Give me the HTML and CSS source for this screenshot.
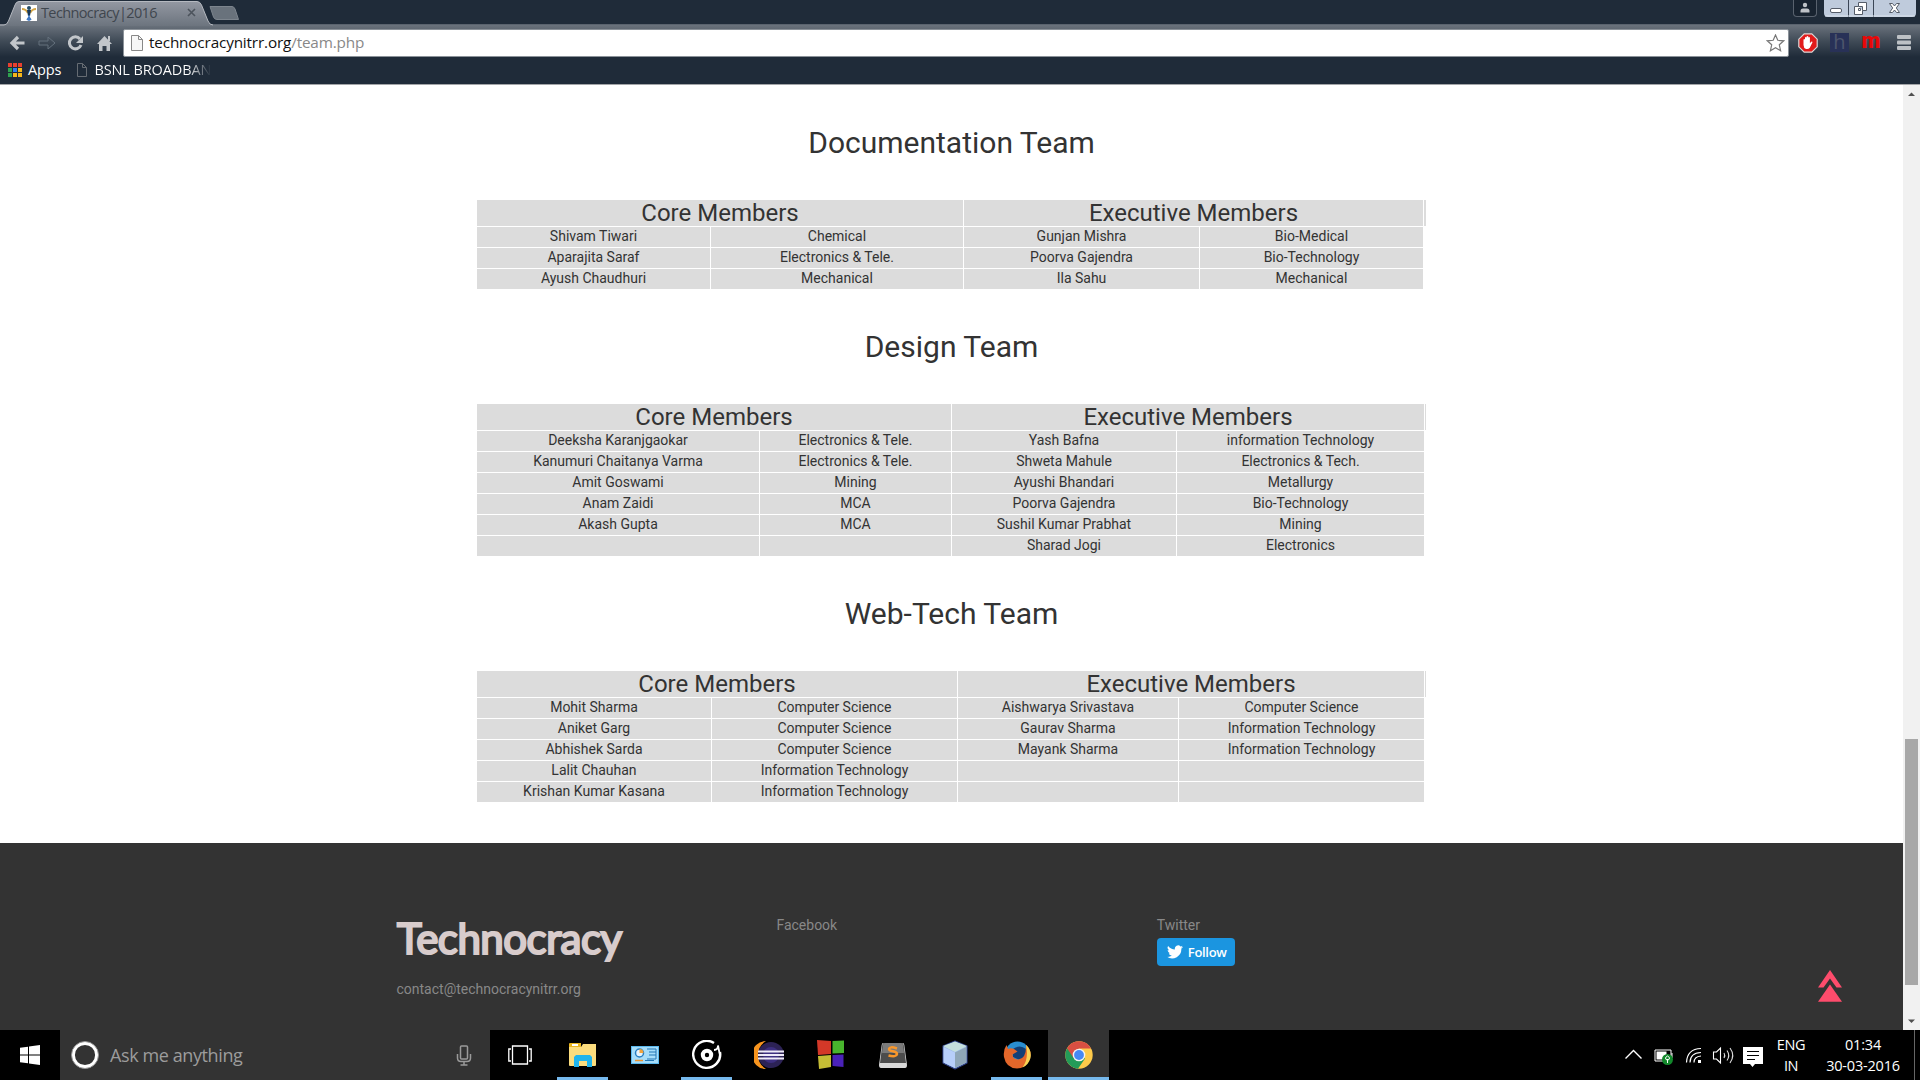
FILE: index.html
```html
<!DOCTYPE html>
<html lang="en">
<head>
<meta charset="utf-8">
<title>Technocracy|2016</title>
<link rel="stylesheet" href="styles.css">
</head>
<body>
<div class="screen">
  <header class="browser">
    <div class="tabstrip">
      <svg class="tab-shape" width="250" height="26" viewBox="0 0 250 26">
        <defs>
          <linearGradient id="tabFill" x1="0" y1="0" x2="0" y2="1"><stop offset="0" stop-color="#9398a2"/><stop offset="1" stop-color="#6c747e"/></linearGradient>
        </defs>
        <path d="M0 25.5 H4 Q7 25 8.5 21 L15 5 Q16 1.5 19 1.5 H197 Q200 1.500 201.500 5 L208 21 Q209.500 25 213 25.500 V26 H0Z" fill="url(#tabFill)"/>
        <path d="M0 25 H4 Q7 25 8.500 21 L15 5 Q16 1.500 19 1.500 H197 Q200 1.500 201.500 5 L208 21 Q209.500 25 213 25" fill="none" stroke="#b5b9c0"/>
        <path d="M210 6.500 H232 Q234 6.500 235 9 L238.500 19.500 H217 Q214.500 19.500 213.500 17Z" fill="#69727c" stroke="#7d858e"/>
      </svg>
      <div class="tab">
        <svg width="16" height="16" viewBox="0 0 16 16"><path fill="#fff" d="M0 0h16v16H0z"/><path d="M1 4q4 0 6 4M15 4q-4 0-6 4" stroke="#d5a646" stroke-width="2" fill="none"/><circle cx="8" cy="3" r="2" fill="#234c66"/><path d="M6 5h4l-1 6H7z" fill="#19395a"/><path d="M8 10v6M6 15l2-3 2 3" stroke="#3e78c4" stroke-width="1.500"/></svg>
        <span class="tab-title">Technocracy|2016</span>
        <svg class="tab-close" width="9" height="9" viewBox="0 0 9 9"><path d="M1 1l7 7M8 1L1 8" stroke="#4c535c" stroke-width="1.600"/></svg>
      </div>
      <div class="window-buttons">
        <span class="user-btn"><svg width="12" height="12" viewBox="0 0 12 12" fill="#bfc3c8"><circle cx="6" cy="3" r="2.200"/><path d="M1.500 10.500V9Q1.500 6.500 4 6.500h4q2.500 0 2.500 2.500v1.500z"/></svg></span>
        <span class="win-group">
          <svg width="92" height="17" viewBox="0 0 92 17"><path d="M0 0h92v13q0 4-4 4H4q-4 0-4-4z" fill="#bfcbdc"/><path d="M24.500 0v17M49.500 0v17" stroke="#3b4656"/><path d="M1 16h90" stroke="#dae2ec"/><rect x="6.500" y="8.500" width="11" height="4" rx="1.500" fill="#fff" stroke="#555c68"/><path d="M34.500 2.500h8v8h-4v4h-8v-8h4zM38.500 10.500v-4h-4M34.500 8.500h2v2h-2z" fill="#fff" stroke="#555c68"/><path d="M65.500 3.500h3l2 2.500 2-2.500h3L72.300 8l3.200 4.500h-3L70.500 10l-2 2.500h-3L68.700 8z" fill="#fff" stroke="#555c68"/></svg>
        </span>
      </div>
    </div>
    <div class="toolbar">
      <svg class="nav-icons" width="104" height="20" viewBox="0 0 104 20">
        <path d="M16.500 10H4M10 4L4 10l6 6" fill="none" stroke="#c2c6ca" stroke-width="3.200"/>
        <path d="M31 8h9V4l7 6-7 6v-4h-9z" fill="none" stroke="#65717d"/>
        <path d="M72 6A6 6 0 1 0 73 12" fill="none" stroke="#c2c6ca" stroke-width="3"/><path d="M75 3v7h-7z" fill="#c2c6ca"/>
        <path d="M89 11l7.500-8 7.500 8h-2v7h-3.500v-5h-4v5H91v-7z" fill="#c2c6ca"/><path d="M100 3h2v5h-2z" fill="#c2c6ca"/>
      </svg>
      <div class="omnibox">
        <svg width="12" height="16" viewBox="0 0 12 16"><path d="M.5.5h7l4 4v11H.5z" fill="#f7f7f7" stroke="#888"/><path d="M7.500.5v4h4" fill="none" stroke="#888"/></svg>
        <span class="url">technocracynitrr.org<span class="url-path">/team.php</span></span>
        <svg class="star" width="19" height="18" viewBox="0 0 19 18"><path d="M9.500 1l2.300 5.300 5.900.5-4.400 4 1.300 5.900-5.100-3-5.100 3 1.300-5.900-4.400-4 5.900-.5z" fill="#fff" stroke="#777" stroke-width="1.200"/></svg>
      </div>
      <div class="extensions">
        <svg width="20" height="20" viewBox="0 0 20 20"><path d="M6.200.8h7.600l5.400 5.400v7.600l-5.400 5.400H6.200L.8 13.800V6.200z" fill="#e11b1b" stroke="#d9d9d9" stroke-width="1.200"/><path d="M5.500 10V6.500q.9-1 1.500 0V9V4.500q.9-1 1.600 0V9V3.600q.9-1 1.700 0V9V4.500q.9-1 1.600 0v5.800l1.300-1.600q1.500-.4 1.200.7l-2.600 5.400q-1.300 1.700-3.700 1.200Q5.500 15 5.500 12z" fill="#fff"/></svg>
        <span class="ext-h">h</span>
        <span class="ext-m">m</span>
        <svg class="menu" width="14" height="15" viewBox="0 0 14 15" fill="#bdc1c5"><rect width="14" height="4" rx="1"/><rect y="5.500" width="14" height="4" rx="1"/><rect y="11" width="14" height="4" rx="1"/></svg>
      </div>
    </div>
    <div class="bookmarks">
      <svg width="14" height="14" viewBox="0 0 14 14"><path d="M0 0h4v4H0zM5 0h4v4H5zM10 0h4v4h-4z" fill="#e8402f"/><path d="M0 5h4v4H0zM0 10h4v4H0z" fill="#2fa24f"/><path d="M5 5h4v4H5z" fill="#2d7ff0"/><path d="M10 5h4v4h-4zM5 10h4v4H5zM10 10h4v4h-4z" fill="#f6b61a"/></svg>
      <span class="apps-label">Apps</span>
      <svg class="page-icon" width="10" height="14" viewBox="0 0 10 14"><path d="M.5.5h5l4 4v9h-9zM5.500.5v4h4" fill="none" stroke="#666c73"/></svg>
      <span class="bsnl-label">BSNL BROADBAN</span>
    </div>
  </header>

  <div class="viewport">
    <div class="page">
      <main class="teams">
        <h2>Documentation Team</h2>
        <table class="team">
          <colgroup><col class="w233"><col class="w252"><col class="w235"><col class="w223"><col class="w2"></colgroup>
          <tr><th colspan="2">Core Members</th><th colspan="2">Executive Members</th><th></th></tr>
          <tr><td>Shivam Tiwari</td><td>Chemical</td><td>Gunjan Mishra</td><td>Bio-Medical</td></tr>
          <tr><td>Aparajita Saraf</td><td>Electronics &amp; Tele.</td><td>Poorva Gajendra</td><td>Bio-Technology</td></tr>
          <tr><td>Ayush Chaudhuri</td><td>Mechanical</td><td>Ila Sahu</td><td>Mechanical</td></tr>
        </table>
        <h2>Design Team</h2>
        <table class="team">
          <colgroup><col class="w282"><col class="w191"><col class="w224"><col class="w247"><col class="w1"></colgroup>
          <tr><th colspan="2">Core Members</th><th colspan="2">Executive Members</th><th></th></tr>
          <tr><td>Deeksha Karanjgaokar</td><td>Electronics &amp; Tele.</td><td>Yash Bafna</td><td>information Technology</td></tr>
          <tr><td>Kanumuri Chaitanya Varma</td><td>Electronics &amp; Tele.</td><td>Shweta Mahule</td><td>Electronics &amp; Tech.</td></tr>
          <tr><td>Amit Goswami</td><td>Mining</td><td>Ayushi Bhandari</td><td>Metallurgy</td></tr>
          <tr><td>Anam Zaidi</td><td>MCA</td><td>Poorva Gajendra</td><td>Bio-Technology</td></tr>
          <tr><td>Akash Gupta</td><td>MCA</td><td>Sushil Kumar Prabhat</td><td>Mining</td></tr>
          <tr><td></td><td></td><td>Sharad Jogi</td><td>Electronics</td></tr>
        </table>
        <h2>Web-Tech Team</h2>
        <table class="team">
          <colgroup><col class="w234"><col class="w245"><col class="w220"><col class="w245"><col class="w1"></colgroup>
          <tr><th colspan="2">Core Members</th><th colspan="2">Executive Members</th><th></th></tr>
          <tr><td>Mohit Sharma</td><td>Computer Science</td><td>Aishwarya Srivastava</td><td>Computer Science</td></tr>
          <tr><td>Aniket Garg</td><td>Computer Science</td><td>Gaurav Sharma</td><td>Information Technology</td></tr>
          <tr><td>Abhishek Sarda</td><td>Computer Science</td><td>Mayank Sharma</td><td>Information Technology</td></tr>
          <tr><td>Lalit Chauhan</td><td>Information Technology</td><td></td><td></td></tr>
          <tr><td>Krishan Kumar Kasana</td><td>Information Technology</td><td></td><td></td></tr>
        </table>
      </main>
      <footer class="footer">
        <div class="foot-col">
          <div class="brand">Technocracy</div>
          <p class="contact">contact@technocracynitrr.org</p>
        </div>
        <div class="foot-col"><p>Facebook</p></div>
        <div class="foot-col"><p>Twitter</p>
          <a class="follow"><svg width="16" height="14" viewBox="0 0 24 20"><path fill="#fff" d="M24 2.400c-.9.400-1.800.7-2.800.8 1-.6 1.800-1.600 2.200-2.700-1 .6-2 1-3.100 1.200A4.900 4.900 0 0 0 11.900 6.200C7.800 6 4.200 4 1.700.9a4.900 4.900 0 0 0 1.500 6.600c-.8 0-1.600-.2-2.200-.6 0 2.300 1.600 4.400 3.900 4.900-.7.200-1.500.2-2.200.1.600 2 2.400 3.400 4.600 3.400A9.900 9.900 0 0 1 0 17.300 13.900 13.900 0 0 0 21.500 4.900c1-.7 1.800-1.600 2.500-2.500z"/></svg>Follow</a>
        </div>
        <svg class="to-top" width="24" height="32" viewBox="0 0 24 32" fill="#fe4c6c"><path d="M12 0l12 17.500h-5.500L12 8.500l-6.500 9H0z"/><path d="M12 14.500L24 31.700H0z"/></svg>
      </footer>
    </div>
    <div class="scrollbar">
      <svg width="17" height="17" viewBox="0 0 17 17"><path d="M5 11L8.500 7.500 12 11z" fill="#505050"/></svg>
      <div class="track"><div class="thumb"></div></div>
      <svg width="17" height="17" viewBox="0 0 17 17"><path d="M5 6.500L8.500 10 12 6.500z" fill="#505050"/></svg>
    </div>
  </div>

  <div class="taskbar">
    <div class="start"><svg width="20" height="20" viewBox="0 0 20 20" fill="#fff"><path d="M0 2.800l8-1.100v7.800H0zM9 1.500L20 0v9.500H9zM0 10.500h8v7.800l-8-1.100zM9 10.500h11V20L9 18.500z"/></svg></div>
    <div class="search">
      <svg width="28" height="28" viewBox="0 0 28 28"><circle cx="14" cy="14" r="11.700" fill="none" stroke="#fff" stroke-width="3.200"/><circle cx="14" cy="14" r="13.500" fill="none" stroke="#999"/></svg>
      <span class="ask">Ask me anything</span>
      <svg class="mic" width="16" height="21" viewBox="0 0 16 21" fill="none" stroke="#9a9a9a" stroke-width="1.500"><rect x="4.500" y="1" width="7" height="13" rx="1"/><path d="M1.500 9v4q0 3.500 3.500 3.500h6q3.500 0 3.500-3.500V9M8 16.500V20M4.500 20h7"/></svg>
    </div>
    <div class="apps">
      <div class="app task-view"><svg width="24" height="20" viewBox="0 0 24 20" fill="none" stroke="#fff" stroke-width="1.300"><path d="M4.500 1h15v18h-15zM3 4H.8v12H3M21 4h2.200v12H21"/></svg></div>
      <div class="app open"><svg width="28" height="24" viewBox="0 0 28 24"><path d="M0 1q0-1 1-1h11v4H0z" fill="#e9b51e"/><path d="M3 1h6v2H3z" fill="#fff"/><path d="M0 4h12l2-3h13v21q0 1-1 1H1q-1 0-1-1z" fill="#fbdc7d"/><path d="M5 24V14l2-2h14l2 2v10h-5v-6h-8v6z" fill="#20b4ec"/></svg></div>
      <div class="app"><svg width="28" height="18" viewBox="0 0 28 18"><path d="M0 0h28v18H0z" fill="#5bb9ee"/><path d="M1 1h26v16H1z" fill="#a6ddfa"/><circle cx="8.500" cy="7" r="4" fill="#e8f4fb" stroke="#277fc3" stroke-width="1.500"/><path d="M8.500 7V3A4 4 0 0 1 12.500 7z" fill="#f2a33a"/><path d="M16 3h9v10h-9M18 6h7M18 9h7" fill="none" stroke="#2277b5"/><path d="M4 14.500h8" stroke="#ed942f" stroke-width="1.500"/><path d="M14 14.500h9" stroke="#2277b5"/></svg></div>
      <div class="app open"><svg width="30" height="30" viewBox="0 0 30 30" fill="none" stroke="#fff"><path d="M22 3A13.500 13.500 0 1 0 28 12" stroke-width="2.400"/><circle cx="15" cy="15" r="4.200" stroke-width="4"/><path d="M22 10q4 0 4-4.500l2 10" stroke-width="1.800"/></svg></div>
      <div class="app"><svg width="30" height="28" viewBox="0 0 30 28"><path d="M12 0A14 14 0 0 0 12 28Q4 23 4 14T12 0z" fill="#f7941e"/><circle cx="17" cy="14" r="13" fill="#2c2255"/><circle cx="17" cy="14" r="8" fill="#3d2f80"/><path d="M4 10.500h26M4 14h26M4 17.500h26" stroke="#eeeaf8" stroke-width="2"/></svg></div>
      <div class="app"><svg width="28" height="30" viewBox="0 0 28 30"><path d="M0 0l14 1v13L1 15z" fill="#d33828"/><path d="M15.500 1L27 .5V13l-11.500.5z" fill="#48b52d"/><path d="M1 16l13-1v12L2 29z" fill="#c5bd35"/><path d="M15.500 15l11-.5V27l-11-1z" fill="#4a22b8"/></svg></div>
      <div class="app"><svg width="28" height="26" viewBox="0 0 28 26"><path d="M4 1h20q1 0 1.300 2L28 23q0 3-2 3H2q-2 0-2-3L2.700 3Q3 1 4 1z" fill="#d9d9d9"/><path d="M5 1h18q1.500 0 1.700 2L27 21H1L3.300 3Q3.500 1 5 1z" fill="#4c4c4c"/><path d="M4 3q0-2 2-2h16q2 0 2 2l1 8H3z" fill="#7a7a7a"/><path d="M18 6.500q-7.500-2.500-8 .5 0 1.800 4 2.300 4 .7 4 2.700-.5 3.500-8.500 1.500" fill="none" stroke="#f9972b" stroke-width="2.500"/></svg></div>
      <div class="app"><svg width="28" height="30" viewBox="0 0 28 30"><g stroke="#2b3c80" stroke-width="1.200" stroke-linejoin="round"><path d="M14 1l12 5v17l-12 6-12-6V6z" fill="#9fbce8"/></g><path d="M14 1.500L26 6l-12 6L2 6z" fill="#c5e0de"/><path d="M2.500 7L14 12.500V28L2.500 22.500z" fill="#b7cffa"/><path d="M25.500 7L14 12.500V28l11.500-5.500z" fill="#8fa7b8"/></svg></div>
      <div class="app open"><svg width="28" height="28" viewBox="0 0 28 28"><circle cx="14.500" cy="13" r="12.500" fill="#2a8ed0"/><path d="M10 8q7-5 13 0 2 8-4 12l-9-4z" fill="#123f76"/><path d="M23 4q6 5 4 13-3 10-13 10.500Q3 27 1 16 0 9 3.500 4l1.500 4q3-1.500 6 0l3.500 2.500-5 3q.5 5 6 5 8-1 7.500-14.500z" fill="#e4672a"/><path d="M23 4q6 5 4.500 13-2 7-8 9.500Q26 18 23 4z" fill="#f8d354"/></svg></div>
      <div class="app open active"><svg width="28" height="28" viewBox="0 0 28 28"><circle cx="14" cy="14" r="13.700" fill="#fdca4a"/><path d="M14 14L2.100 7.200A13.700 13.700 0 0 0 13 27.700L20 17.500z" fill="#239b58"/><path d="M2.100 7.200A13.700 13.700 0 0 1 26 7.500H14L8.500 17z" fill="#d94f42"/><circle cx="14" cy="14" r="6.300" fill="#f3f3f3"/><circle cx="14" cy="14" r="4.900" fill="#4688f4"/></svg></div>
    </div>
    <div class="tray">
      <svg width="140" height="26" viewBox="0 0 140 26">
        <path d="M.5 16.500L8.500 8.500l8 8" fill="none" stroke="#fff" stroke-width="1.400"/>
        <path d="M30 8h16v11H30z" fill="none" stroke="#fff"/><path d="M31.500 9.500h10v8h-10z" fill="#fff"/><path d="M46.500 11h1v5h-1z" fill="#fff"/><circle cx="42.500" cy="17.500" r="5.500" fill="#12882b"/><path d="M42.500 21v-4M40.500 16q2-4 4 0 0 2-2 2t-2-2z" fill="none" stroke="#fff"/>
        <g fill="none" stroke="#fff" stroke-width="1.200"><path d="M61.500 20.500Q62 7 76 6.500" /><path d="M65 20.500q0-9.500 11-10"/><path d="M69 20.500q0-6 7-6.500"/></g><path d="M73 18h3v3h-3z" fill="#fff"/>
        <path d="M88.500 10h3l4-4v15l-4-4h-3z" fill="none" stroke="#fff" stroke-width="1.100"/><path d="M99 11q1.500 2.500 0 5M102 8.500q3.500 5 0 10M105 6q5.500 7.500 0 15" fill="none" stroke="#ddd" stroke-width="1.100"/>
        <path d="M118 5h20v17h-8l-2.500 3-2.500-3h-7z" fill="#fff"/><path d="M122 9.500h12M122 13.500h12M122 17.500h8" stroke="#000" stroke-width="1.200"/>
      </svg>
      <div class="lang"><span>ENG</span><span>IN</span></div>
      <div class="clock"><span>01:34</span><span>30-03-2016</span></div>
      <div class="show-desktop"></div>
    </div>
  </div>
</div>
</body>
</html>
```

FILE: styles.css
```css
* { box-sizing: border-box; }
body { margin: 0; background: #fff; font-family: Roboto, sans-serif; }
svg { display: block; flex: none; }
p { margin: 0; }

.screen { width: 1920px; height: 1080px; display: flex; flex-direction: column; overflow: hidden; }

/* Browser frame */
.browser { height: 85px; flex: none; background: #1f2b39; border-bottom: 1px solid #a3a5a8; font-family: "Open Sans", sans-serif; }
.tabstrip { position: relative; height: 25px; display: flex; align-items: flex-start; justify-content: space-between; border-bottom: 1px solid #5a636e; }
.tab-shape { position: absolute; left: 0; top: 0; }
.tab { position: relative; display: flex; align-items: center; height: 25px; width: 205px; padding-left: 21px; }
.tab-title { margin-left: 4px; font-size: 14.500px; letter-spacing: -0.620px; color: #3f464e; }
.tab-close { margin-left: auto; margin-right: 9px; }
.window-buttons { display: flex; gap: 7px; padding-right: 4px; }
.user-btn { width: 24px; height: 17px; display: flex; justify-content: center; padding-top: 2px; border: 1px solid #59626e; border-top: 0; border-radius: 0 0 4px 4px; background: #182330; }
.toolbar { height: 32px; display: flex; align-items: center; padding: 3px 9px 0 8px; background: linear-gradient(#6a727c, #404b57 50%, #1f2b39); }
.nav-icons { margin-right: 11px; }
.omnibox { flex: 1; height: 28px; display: flex; align-items: center; padding: 0 3px 0 7px; background: #fff; border: 1px solid #8b9299; border-radius: 2px; }
.url { margin-left: 6px; padding-bottom: 2px; font-size: 15.300px; color: #111; letter-spacing: -0.160px; white-space: nowrap; }
.url-path { color: #888; }
.star { margin-left: auto; }
.extensions { display: flex; align-items: center; margin-left: 9px; }
.ext-h { width: 19px; height: 19px; margin-left: 12px; background: #283157; color: #4e566c; font: 20px/18px "Open Sans", sans-serif; text-align: center; }
.ext-m { width: 20px; margin: 0 0 4px 12px; color: #e80808; font: 900 22px/20px Roboto, sans-serif; text-align: center; }
.menu { margin-left: 16px; }
.bookmarks { height: 27px; display: flex; align-items: center; padding: 0 0 2px 8px; font-size: 14.500px; color: #fff; }
.apps-label { margin-left: 6px; letter-spacing: -0.100px; }
.page-icon { margin-left: 16px; }
.bsnl-label { margin-left: 7px; letter-spacing: -0.100px; background: linear-gradient(90deg, #fff 80%, #1f2b39); background-clip: text; -webkit-background-clip: text; color: transparent; }

/* Page content */
.viewport { flex: 1; display: flex; min-height: 0; }
.page { flex: 1; display: flex; flex-direction: column; background: #fff; }
.teams { height: 758px; flex: none; display: flex; flex-direction: column; align-items: center; }
h2 { margin: 0; padding-top: 37px; height: 114px; font-size: 30px; line-height: 42px; font-weight: 400; color: #333; }
.team { width: 951px; margin-bottom: -1px; table-layout: fixed; border-spacing: 1px; font-size: 14px; line-height: 18px; color: #333; text-align: center; }
.team th, .team td { padding: 0; background: #dcdcdc; }
.team th { height: 26px; font-size: 24px; line-height: 26px; font-weight: 400; }
.team td { height: 20px; vertical-align: top; }
.w1 { width: 1px; } .w2 { width: 2px; }
.w191 { width: 191px; } .w220 { width: 220px; } .w223 { width: 223px; } .w224 { width: 224px; }
.w233 { width: 233px; } .w234 { width: 234px; } .w235 { width: 235px; } .w245 { width: 245px; }
.w247 { width: 247px; } .w252 { width: 252px; } .w282 { width: 282px; }

.footer { position: relative; flex: 1; display: flex; padding: 72px 0 0 396px; background: #333; color: #888; font-size: 14px; line-height: 20px; }
.foot-col { width: 380.400px; }
.brand { height: 58px; padding-left: 1px; font: 400 42px/46px Lato, sans-serif; letter-spacing: -0.500px; color: #d8cccc; -webkit-text-stroke: 2.200px #d8cccc; white-space: nowrap; }
.contact { margin: 6px 0 0 0.500px; }
.follow { display: flex; align-items: center; gap: 5px; width: 78px; height: 28px; margin-top: 3px; padding: 0 0 1px 10px; border-radius: 4px; background: #1b95e0; color: #fff; font: 600 13px "Open Sans", sans-serif; letter-spacing: -0.300px; }
.to-top { position: absolute; right: 61px; bottom: 28px; }

.scrollbar { width: 17px; display: flex; flex-direction: column; background: #f1f1f1; }
.track { flex: 1; padding: 637px 2px 0; }
.thumb { height: 246px; background: #a8a8a8; }

/* Taskbar */
.taskbar { height: 50px; flex: none; display: flex; background: #000; font-family: "Open Sans", sans-serif; color: #fff; }
.start { width: 60px; display: flex; align-items: center; justify-content: center; }
.search { width: 430px; display: flex; align-items: center; padding: 0 18px 0 11px; background: #333; }
.ask { margin-left: 11px; font-size: 18px; color: #9c9c9c; letter-spacing: -0.400px; }
.mic { margin-left: auto; }
.apps { display: flex; gap: 1px; }
.app { width: 61px; display: flex; align-items: center; justify-content: center; position: relative; }
.task-view { padding-right: 1px; }
.app.open::after { content: ""; position: absolute; left: 5px; right: 5px; bottom: 0; height: 3px; background: #76b9ed; }
.app.active { background: #333; }
.app.active::after { left: 0; right: 0; }
.tray { flex: 1; display: flex; align-items: center; justify-content: flex-end; font-size: 14.500px; }
.lang, .clock { display: flex; flex-direction: column; align-items: center; line-height: 21px; letter-spacing: -0.400px; }
.lang { width: 44px; margin-left: 4px; }
.clock { width: 100px; letter-spacing: -0.200px; }
.show-desktop { width: 6px; height: 50px; margin-left: 1px; border-left: 1px solid #666; }
```
